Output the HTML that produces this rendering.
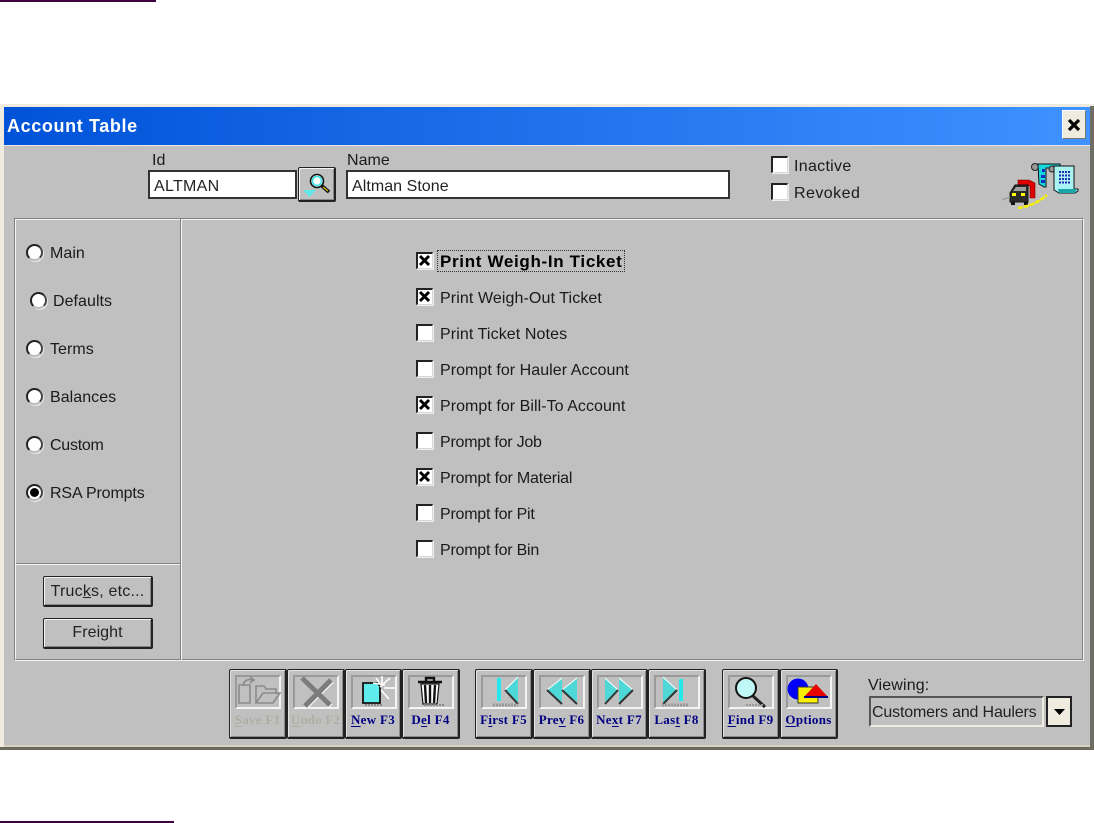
<!DOCTYPE html>
<html><head><meta charset="utf-8">
<style>
html,body{margin:0;padding:0;background:#fff;width:1094px;height:823px;overflow:hidden}
body{position:relative;font-family:"Liberation Sans",sans-serif;font-size:16px;color:#111}
.a{position:absolute}
.t{position:absolute;white-space:nowrap;line-height:18px;letter-spacing:.05px;margin-top:1px;color:#1a1a1a}
.cb{position:absolute;width:14px;height:14px;background:#fff;border-top:2px solid #222;border-left:2px solid #222;border-right:1px solid #d8d8d8;border-bottom:1px solid #d8d8d8;box-shadow:1px 1px 0 #eee}
.cb svg{position:absolute;left:0;top:0}
.r{position:absolute;width:17px;height:17px;border-radius:50%;background:#fff;border:2px solid;border-color:#222 #444 #bbb #222;box-sizing:border-box;box-shadow:1px 1px 0 #e8e8e8}
.inp{position:absolute;background:#fff;border:2px solid #333;box-sizing:border-box;line-height:29px;padding-left:4px;letter-spacing:.05px;white-space:nowrap;color:#222}
.btn{position:absolute;box-sizing:border-box;background:#c0c0c0;border:1px solid #222;border-right-width:2px;border-bottom-width:2px;border-radius:2px;box-shadow:inset 1px 1px 0 #f4f4f4,inset -1px -1px 0 #888;text-align:center;letter-spacing:.05px;color:#222}
.tb{position:absolute;top:669px;height:70px;box-sizing:border-box;background:#c0c0c0;border:1px solid #222;border-right-width:2px;border-bottom-width:2px;border-radius:2px;box-shadow:inset 1px 1px 0 #e4e4e4,inset -1px -1px 0 #8a8a8a}
.ic{position:absolute;left:5px;top:5px;width:46px;height:34px;box-sizing:border-box;border:2px solid;border-color:#9a9a9a #f4f4f4 #f4f4f4 #9a9a9a}
.ic svg{position:absolute;left:-2px;top:-2px}
.lb{position:absolute;left:0;right:0;top:41px;text-align:center;font:bold 13px/17px "Liberation Serif",serif;color:#000080;white-space:nowrap;letter-spacing:.3px}
.lb.d{color:#b0aea2}
.lb u{text-underline-offset:2px}
</style></head><body>
<div class="a" style="left:0;top:0;width:156px;height:2px;background:#40003f"></div>
<div class="a" style="left:0;top:821px;width:174px;height:2px;background:#40003f"></div>

<!-- window -->
<div class="a" style="left:0;top:104px;width:1094px;height:646px;background:#efebde"></div>
<div class="a" style="left:1090px;top:106px;width:4px;height:644px;background:#6f6e64"></div>
<div class="a" style="left:0;top:747px;width:1094px;height:3px;background:#6a6a5e"></div>
<div class="a" style="left:4px;top:745px;width:1086px;height:2px;background:#d6d2c2"></div>
<div class="a" style="left:4px;top:107px;width:1086px;height:38px;background:linear-gradient(90deg,#0053d8 0%,#1a6ae8 40%,#3f92ff 100%)"></div>
<div class="a" style="left:4px;top:145px;width:1086px;height:600px;background:#c0c0c0;border-top:1px solid #e6e6e6;box-sizing:border-box"></div>
<div class="t" style="left:7px;top:116px;color:#fff;font-weight:bold;font-size:18px;letter-spacing:.62px">Account Table</div>
<div class="a" style="left:1062px;top:110px;width:24px;height:29px;background:#efebde;box-sizing:border-box;border-right:1px solid #777;border-bottom:1px solid #777;border-top:1px solid #fff;border-left:1px solid #fff">
<svg width="22" height="27" style="position:absolute;left:0;top:0"><path d="M6 9 L16 19 M16 9 L6 19" stroke="#000" stroke-width="3.2"/></svg></div>

<!-- header fields -->
<div class="t" style="left:152px;top:151px">Id</div>
<div class="inp" style="left:148px;top:170px;width:149px;height:29px;letter-spacing:.3px">ALTMAN</div>
<div class="btn" style="left:298px;top:167px;width:38px;height:35px">
<svg width="36" height="32" style="position:absolute;left:0;top:0"><circle cx="18" cy="13" r="6.5" fill="#fff" stroke="#111" stroke-width="1.6"/><circle cx="18" cy="13" r="4.5" fill="none" stroke="#38e0e8" stroke-width="1.6"/><path d="M23 18 L30 24" stroke="#111" stroke-width="3.6"/><path d="M24 19 L29 23" stroke="#d8c000" stroke-width="1.2"/><path d="M4 22 H17 L10.5 29 Z" fill="#5fe8e8"/></svg></div>
<div class="t" style="left:347px;top:151px">Name</div>
<div class="inp" style="left:346px;top:170px;width:384px;height:29px">Altman Stone</div>

<div class="cb" style="left:771px;top:156px"></div><div class="t" style="left:794px;top:157px;letter-spacing:.3px">Inactive</div>
<div class="cb" style="left:771px;top:183px"></div><div class="t" style="left:794px;top:184px;letter-spacing:.45px">Revoked</div>

<!-- logo -->
<svg class="a" style="left:1000px;top:160px" width="82" height="54">
<circle cx="35" cy="7" r="3.5" fill="#999" stroke="#222"/>
<path d="M38 4 H60 V8 H46 V27 H44 L39 24 Z" fill="#19d8dc" stroke="#111"/>
<path d="M42 9h3v3h-3zM41 15h4v3h-4zM41 20h4v3h-4z" fill="#1030c0"/>
<circle cx="52" cy="9" r="3" fill="#999" stroke="#222"/>
<path d="M54 6 H74 V29 H78 V31 L75 33 H59 L54 30 Z" fill="#a8f4f4" stroke="#111"/>
<path d="M58 29 H77 L75 33 H59 Z" fill="#19a8a8"/>
<path d="M59 12h12M59 15.5h12M59 19h12M59 22.5h12" stroke="#2a2ab0" stroke-width="2" stroke-dasharray="2 1"/>
<path d="M18 20 H29 L35 23 V38 H30 V26 H18 Z" fill="#e00000" stroke="#600" stroke-width=".6"/>
<path d="M15 25 H28 V42 H10 V33 Z" fill="#2a2a2a" stroke="#111"/>
<path d="M16 27 H26 V31 H13 Z" fill="#a0a0a0"/>
<rect x="12" y="33" width="4" height="3" fill="#ff0"/><rect x="21" y="33" width="4" height="3" fill="#ff0"/>
<path d="M11 42h4v3h-4zM24 42h4v3h-4z" fill="#111"/>
<path d="M2 40 L10 37" stroke="#999" stroke-width="1.4"/>
<path d="M18 48 Q34 46 47 35" stroke="#f5f000" stroke-width="2.6" fill="none" stroke-dasharray="5 1"/>
</svg>

<!-- panel -->
<div class="a" style="left:14px;top:218px;width:1070px;height:443px;box-sizing:border-box;border:1px solid;border-color:#808080 #f4f4f4 #f4f4f4 #808080"></div>
<div class="a" style="left:15px;top:219px;width:1068px;height:441px;box-sizing:border-box;border:1px solid;border-color:#f4f4f4 #808080 #808080 #f4f4f4"></div>
<div class="a" style="left:180px;top:219px;width:1px;height:441px;background:#808080"></div>
<div class="a" style="left:181px;top:219px;width:1px;height:441px;background:#f4f4f4"></div>
<div class="a" style="left:16px;top:563px;width:164px;height:1px;background:#808080"></div>
<div class="a" style="left:16px;top:564px;width:164px;height:1px;background:#f4f4f4"></div>

<!-- radios -->
<div class="r" style="left:26px;top:244px"></div><div class="t" style="left:50px;top:244px">Main</div>
<div class="r" style="left:30px;top:292px"></div><div class="t" style="left:53px;top:292px">Defaults</div>
<div class="r" style="left:26px;top:340px"></div><div class="t" style="left:50px;top:340px">Terms</div>
<div class="r" style="left:26px;top:388px"></div><div class="t" style="left:50px;top:388px">Balances</div>
<div class="r" style="left:26px;top:436px"></div><div class="t" style="left:50px;top:436px;letter-spacing:-.25px">Custom</div>
<div class="r" style="left:26px;top:484px"><div class="a" style="left:2px;top:2px;width:9px;height:9px;border-radius:50%;background:#000"></div></div><div class="t" style="left:50px;top:484px;letter-spacing:-.13px">RSA Prompts</div>

<div class="btn" style="left:43px;top:576px;width:110px;height:31px;line-height:30px;letter-spacing:.2px">Truc<u>k</u>s, etc...</div>
<div class="btn" style="left:43px;top:618px;width:110px;height:31px;line-height:28px">Freight</div>

<!-- checks -->
<div class="cb" style="left:416px;top:252px"><svg width="13" height="13"><path d="M2 2 L11 11 M11 2 L2 11" stroke="#000" stroke-width="3"/></svg></div>
<div class="t" style="left:440px;top:252px;font-weight:bold;font-size:17px;letter-spacing:.67px;color:#000">Print Weigh-In Ticket</div>
<div class="a" style="left:437px;top:250px;width:188px;height:22px;box-sizing:border-box;border:1px dotted #333"></div>
<div class="cb" style="left:416px;top:288px"><svg width="13" height="13"><path d="M2 2 L11 11 M11 2 L2 11" stroke="#000" stroke-width="3"/></svg></div>
<div class="t" style="left:440px;top:289px;letter-spacing:.1px">Print Weigh-Out Ticket</div>
<div class="cb" style="left:416px;top:324px"></div><div class="t" style="left:440px;top:325px;letter-spacing:.1px">Print Ticket Notes</div>
<div class="cb" style="left:416px;top:360px"></div><div class="t" style="left:440px;top:361px">Prompt for Hauler Account</div>
<div class="cb" style="left:416px;top:396px"><svg width="13" height="13"><path d="M2 2 L11 11 M11 2 L2 11" stroke="#000" stroke-width="3"/></svg></div>
<div class="t" style="left:440px;top:397px">Prompt for Bill-To Account</div>
<div class="cb" style="left:416px;top:432px"></div><div class="t" style="left:440px;top:433px;letter-spacing:-.23px">Prompt for Job</div>
<div class="cb" style="left:416px;top:468px"><svg width="13" height="13"><path d="M2 2 L11 11 M11 2 L2 11" stroke="#000" stroke-width="3"/></svg></div>
<div class="t" style="left:440px;top:469px;letter-spacing:-.2px">Prompt for Material</div>
<div class="cb" style="left:416px;top:504px"></div><div class="t" style="left:440px;top:505px;letter-spacing:-.23px">Prompt for Pit</div>
<div class="cb" style="left:416px;top:540px"></div><div class="t" style="left:440px;top:541px;letter-spacing:-.23px">Prompt for Bin</div>

<!-- toolbar -->
<div class="tb" style="left:229px;width:58px"><div class="ic"><svg width="46" height="34" fill="none" stroke="#8a8a8a" stroke-width="1.6"><path d="M4 10 H15 V28 H4 Z" fill="#c0c0c0"/><path d="M8 10 Q10 3 18 5 M15 2 L19 5 L15 8"/><path d="M21 28 V11 H29 L31 14 H41 V19 M21 28 L28 18 H45 L38 28 Z"/></svg></div><div class="lb d"><u>S</u>ave F1</div></div>
<div class="tb" style="left:287px;width:58px"><div class="ic"><svg width="46" height="34" fill="none"><path d="M9 3 L37 30 M38 5 L12 31" stroke="#f0f0f0" stroke-width="5" transform="translate(1,1)"/><path d="M9 3 L37 30 M38 5 L12 31" stroke="#7c7c7c" stroke-width="5"/></svg></div><div class="lb d" style="overflow:hidden;letter-spacing:.2px"><u>U</u>ndo F2</div></div>
<div class="tb" style="left:345px;width:57px"><div class="ic"><svg width="46" height="34"><path d="M12 8 H26 L29 11 V28 H12 Z" fill="#5fecec" stroke="#111" stroke-width="1.8"/><path d="M29 12 L39 3 M31 10 L31 1 M33 13 L44 13 M30 15 L38 24 M22 8 L34 10 M25 3 L29 9" stroke="#fff" stroke-width="1.5"/><path d="M14 30 H31" stroke="#888" stroke-width="2" stroke-dasharray="2 1"/></svg></div><div class="lb"><u>N</u>ew F3</div></div>
<div class="tb" style="left:402px;width:58px"><div class="ic"><svg width="46" height="34"><path d="M10 7 H34 M18 6 V3 H26 V6" stroke="#111" stroke-width="2.4" fill="none"/><path d="M13 9 H31 L29 29 H15 Z" fill="#fff" stroke="#111" stroke-width="1.2"/><path d="M17 10 L18 28 M22 10 V28 M27 10 L26 28" stroke="#111" stroke-width="2.4"/><path d="M16 30 H36" stroke="#888" stroke-width="2" stroke-dasharray="2 1"/></svg></div><div class="lb">D<u>e</u>l F4</div></div>

<div class="tb" style="left:475px;width:58px"><div class="ic"><svg width="46" height="34"><path d="M18 3 V26" stroke="#25e8ec" stroke-width="4"/><path d="M37 2 L24 15 L37 28 Z" fill="#4fd8d8"/><path d="M24 15 L37 2" stroke="#fff" stroke-width="1"/><path d="M24 15 L37 29" stroke="#333" stroke-width="2"/><path d="M12 30 H37" stroke="#999" stroke-width="3" stroke-dasharray="2 1"/></svg></div><div class="lb">F<u>i</u>rst F5</div></div>
<div class="tb" style="left:533px;width:58px"><div class="ic"><svg width="46" height="34"><path d="M23 3 L8 15 L23 27 Z M38 3 L23 15 L38 27 Z" fill="#4fd8d8"/><path d="M8 15 L23 3 M23 15 L38 3" stroke="#fff" stroke-width="1"/><path d="M8 15 L23 29 M23 15 L38 29" stroke="#333" stroke-width="2"/></svg></div><div class="lb">Pre<u>v</u> F6</div></div>
<div class="tb" style="left:591px;width:57px"><div class="ic"><svg width="46" height="34"><path d="M8 3 L21 15 L8 27 Z M22 3 L36 15 L22 27 Z" fill="#4fd8d8"/><path d="M8 3 L21 15 M22 3 L36 15" stroke="#fff" stroke-width="1"/><path d="M21 15 L8 29 M36 15 L22 29" stroke="#333" stroke-width="2"/></svg></div><div class="lb">Ne<u>x</u>t F7</div></div>
<div class="tb" style="left:648px;width:58px"><div class="ic"><svg width="46" height="34"><path d="M9 2 L23 15 L9 28 Z" fill="#4fd8d8"/><path d="M9 2 L23 15" stroke="#fff" stroke-width="1"/><path d="M23 15 L9 29" stroke="#333" stroke-width="2"/><path d="M27 4 V26" stroke="#25e8ec" stroke-width="4"/><path d="M8 30 H34" stroke="#999" stroke-width="3" stroke-dasharray="2 1"/></svg></div><div class="lb">Las<u>t</u> F8</div></div>

<div class="tb" style="left:722px;width:58px"><div class="ic"><svg width="46" height="34"><circle cx="18" cy="13" r="10" fill="#c0f8f8" stroke="#111" stroke-width="2"/><path d="M25 21 L37 32" stroke="#222" stroke-width="3"/><path d="M18 30 H36" stroke="#999" stroke-width="2" stroke-dasharray="2 1"/></svg></div><div class="lb"><u>F</u>ind F9</div></div>
<div class="tb" style="left:780px;width:58px"><div class="ic"><svg width="46" height="34"><circle cx="12" cy="14" r="10.5" fill="#0000f8"/><rect x="12" y="12" width="20" height="16" fill="#f8f000" stroke="#333"/><path d="M18 22 L30 9 L42 22 Z" fill="#e80000"/><path d="M18 22 H42" stroke="#000080" stroke-width="2"/></svg></div><div class="lb"><u>O</u>ptions</div></div>

<!-- viewing -->
<div class="t" style="left:868px;top:676px;letter-spacing:.15px">Viewing:</div>
<div class="a" style="left:869px;top:696px;width:175px;height:31px;box-sizing:border-box;background:#c0c0c0;border:2px solid;border-color:#555 #efebde #efebde #555;line-height:29px;padding-left:1px;letter-spacing:-.17px;white-space:nowrap;color:#222">Customers and Haulers</div>
<div class="a" style="left:1046px;top:696px;width:26px;height:31px;box-sizing:border-box;background:#efebde;border:2px solid #222">
<svg width="22" height="27" style="position:absolute;left:0;top:0"><path d="M6 11 H17 L11.5 17 Z" fill="#000"/></svg></div>
</body></html>
